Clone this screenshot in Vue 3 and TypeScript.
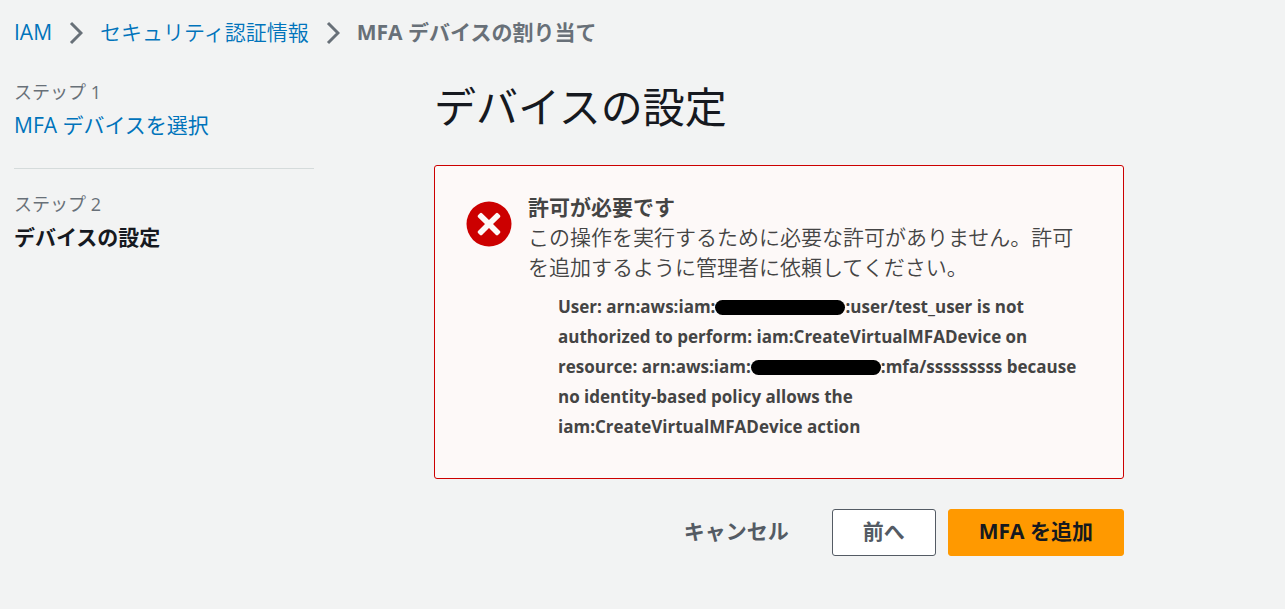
<script setup lang="ts">
interface Step {
  label: string
  title: string
  current: boolean
}

const steps: Step[] = [
  { label: 'ステップ 1', title: 'MFA デバイスを選択', current: false },
  { label: 'ステップ 2', title: 'デバイスの設定', current: true },
]
</script>

<template>
  <div class="page">
    <nav class="breadcrumbs" aria-label="パンくずリスト">
      <a href="#" class="latin">IAM</a>
      <svg class="chevron" viewBox="0 0 14 24" aria-hidden="true"><path d="M2 2l10 10L2 22" /></svg>
      <a href="#">セキュリティ認証情報</a>
      <svg class="chevron" viewBox="0 0 14 24" aria-hidden="true"><path d="M2 2l10 10L2 22" /></svg>
      <span class="here" aria-current="page">MFA デバイスの割り当て</span>
    </nav>

    <div class="layout">
      <aside>
        <ol class="steps">
          <li v-for="step in steps" :key="step.label">
            <div class="step-label">{{ step.label }}</div>
            <strong v-if="step.current" class="step-title" aria-current="step">{{ step.title }}</strong>
            <a v-else class="step-title" href="#">{{ step.title }}</a>
          </li>
        </ol>
      </aside>

      <main>
        <h1>デバイスの設定</h1>

        <section class="alert" role="alert">
          <svg class="error-icon" viewBox="0 0 46 46" aria-hidden="true">
            <circle cx="23" cy="23" r="22.5" />
            <path
              d="M16 12.2L23 19l7-6.8q1-.8 2 0l2 2q.8 1 0 2L27 23l7 7q.8 1 0 2l-2 2q-1 .8-2 0l-7-7-7 7q-1 .8-2 0l-2-2q-.8-1 0-2l7-7-7-6.8q-.8-1 0-2l2-2q1-.8 2 0z"
            />
          </svg>
          <div class="alert-body">
            <h2>許可が必要です</h2>
            <p>この操作を実行するために必要な許可がありません。許可を追加するように管理者に依頼してください。</p>
            <p class="detail">
              User: arn:aws:iam:<span class="redacted"></span>:user/test_user is not authorized to perform:
              iam:CreateVirtualMFADevice on resource: arn:aws:iam:<span class="redacted"></span>:mfa/sssssssss
              because no identity-based policy allows the iam:CreateVirtualMFADevice action
            </p>
          </div>
        </section>

        <div class="actions">
          <button type="button" class="link">キャンセル</button>
          <button type="button" class="normal">前へ</button>
          <button type="button" class="primary">MFA を追加</button>
        </div>
      </main>
    </div>
  </div>
</template>

<style>
body {
  background: #f2f3f3;
}
</style>

<style scoped>
.page {
  box-sizing: border-box;
  padding: 17px 14px;
  color: #16191f;
  font-family: "Open Sans", "Noto Sans CJK JP", sans-serif;
  font-size: 21px;
  line-height: 30px;
}
a {
  color: #0073bb;
  text-decoration: none;
}
.breadcrumbs {
  display: flex;
  align-items: center;
  gap: 17px;
}
.breadcrumbs a,
.alert p {
  font-weight: 350;
}
.breadcrumbs .latin {
  font-weight: 400;
}
.chevron {
  width: 14px;
  height: 24px;
  margin-top: 2px;
  fill: none;
  stroke: #687078;
  stroke-width: 3;
}
.here {
  color: #687078;
  font-weight: 700;
}
.layout {
  display: grid;
  grid-template-columns: 300px minmax(0, 690px);
  column-gap: 120px;
  margin-top: 30px;
}
.steps {
  list-style: none;
  margin: 0;
  padding: 0;
}
.steps li + li {
  margin-top: 28px;
  padding-top: 20px;
  border-top: 1px solid #d5dbdb;
}
.step-label {
  color: #687078;
  font-size: 18px;
}
.step-title {
  display: block;
  margin-top: 3px;
}
strong.step-title {
  font-weight: 700;
}
h1 {
  margin: 0;
  font-size: 42px;
  line-height: 60px;
  font-weight: 400;
}
.alert {
  display: flex;
  gap: 16px;
  margin-top: 28px;
  padding: 26px 31px 36px;
  border: 1px solid #cc0000;
  border-radius: 3px;
  background: #fdf9f8;
  color: #444444;
}
.error-icon {
  flex: none;
  width: 46px;
  height: 46px;
  margin-top: 9px;
}
.error-icon circle {
  fill: #cc0000;
}
.error-icon path {
  fill: #fdf9f8;
}
h2 {
  margin: 0;
  font-size: 21px;
  line-height: 30px;
  font-weight: 700;
}
.alert p {
  margin: 0;
}
.alert .detail {
  margin: 10px 0 0 30px;
  font-size: 17px;
  font-weight: 700;
}
.redacted {
  display: inline-block;
  width: 130px;
  height: 15px;
  border-radius: 8px;
  background: #000000;
  vertical-align: -2px;
}
.actions {
  display: flex;
  justify-content: flex-end;
  gap: 12px;
  margin-top: 30px;
}
button {
  padding: 6px 30px 9px;
  border: 1px solid transparent;
  border-radius: 3px;
  background: transparent;
  color: #545b64;
  font: inherit;
  font-weight: 700;
  cursor: pointer;
}
.normal {
  border-color: #545b64;
  background: #ffffff;
}
.primary {
  border-color: #ff9900;
  background: #ff9900;
  color: #16191f;
}
</style>
